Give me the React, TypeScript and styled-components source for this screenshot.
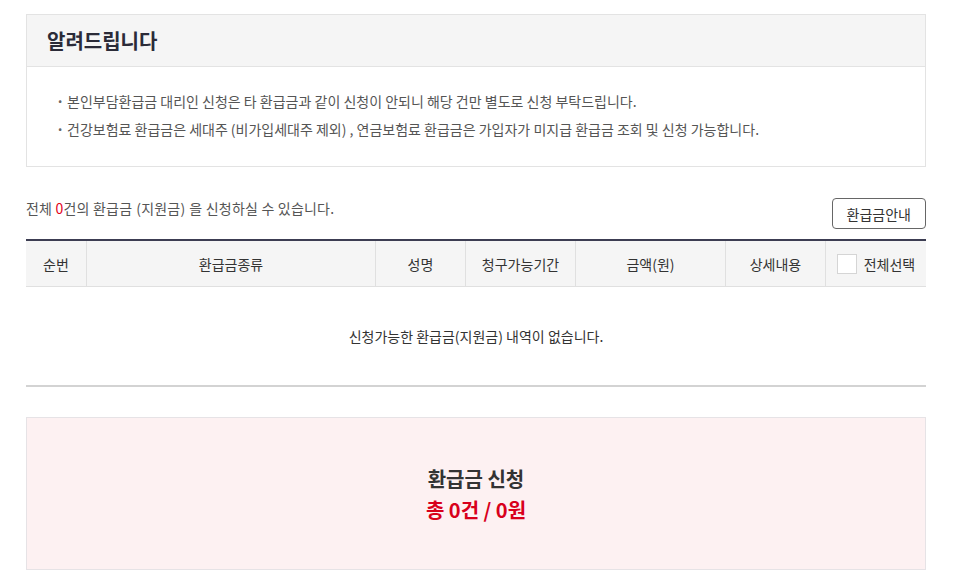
import React from "react";
import styled, { createGlobalStyle } from "styled-components";

const Global = createGlobalStyle`
  html, body { margin: 0; padding: 0; background: #fff; }
  body {
    font-family: "Noto Sans CJK KR", "Noto Sans", sans-serif;
    color: #333;
  }
  * { box-sizing: border-box; }
`;

const Page = styled.div`
  width: 900px;
  margin: 14px 0 0 26px;
`;

const Notice = styled.section`
  border: 1px solid #e3e3e3;
`;

const NoticeHead = styled.h2`
  margin: 0;
  height: 52px;
  padding: 0 20px;
  display: flex;
  align-items: center;
  background: #f5f5f5;
  border-bottom: 1px solid #e3e3e3;
  font-size: 20px;
  font-weight: 700;
  color: #2b2b38;
`;

const NoticeList = styled.ul`
  list-style: none;
  margin: 0;
  padding: 20px 0 23px 29px;
`;

const NoticeItem = styled.li`
  display: flex;
  font-size: 14px;
  line-height: 28px;
  color: #555;
  &::before {
    content: "·";
    width: 11px;
    font-weight: 700;
    color: #666;
  }
`;

const OpenParen = styled.span<{ $gap: number }>`
  margin-left: ${(p) => p.$gap}px;
`;

const CloseParen = styled.span<{ $gap: number }>`
  margin-right: ${(p) => p.$gap}px;
`;

const SummaryBar = styled.div`
  display: flex;
  justify-content: space-between;
  align-items: flex-start;
  margin-top: 31px;
  margin-bottom: 10px;
`;

const SummaryText = styled.p`
  margin: 0;
  font-size: 14px;
  line-height: 20px;
  letter-spacing: 0.2px;
  color: #555;
`;

const Red = styled.span`
  color: #e2001a;
`;

const GuideButton = styled.button`
  height: 31px;
  padding: 0 14px;
  border: 1px solid #666;
  border-radius: 4px;
  background: #fff;
  font-family: inherit;
  font-size: 14px;
  color: #333;
`;

const Table = styled.div`
  border-top: 2px solid #3c3d52;
`;

const HeadRow = styled.div`
  display: grid;
  grid-template-columns: 60px 289px 90px 110px 150px 100px 1fr;
  height: 46px;
  background: #f5f5f5;
  border-bottom: 1px solid #e0e0e0;
`;

const HeadCell = styled.div`
  display: flex;
  align-items: center;
  justify-content: center;
  gap: 7px;
  font-size: 14px;
  color: #333;
  & + & { border-left: 1px solid #e0e0e0; }
`;

const CheckBox = styled.span`
  width: 20px;
  height: 20px;
  border: 1px solid #d5d5d5;
  background: #fff;
`;

const EmptyRow = styled.div`
  height: 100px;
  display: flex;
  align-items: center;
  justify-content: center;
  font-size: 14px;
  color: #333;
  border-bottom: 2px solid #d3d3d3;
`;

const ApplyBox = styled.div`
  margin-top: 30px;
  height: 153px;
  border: 1px solid #e6e3e6;
  background: #fdf1f2;
  display: flex;
  flex-direction: column;
  align-items: center;
  justify-content: center;
`;

const ApplyTitle = styled.div`
  font-size: 20px;
  font-weight: 700;
  line-height: 31px;
  color: #333;
`;

const ApplyTotal = styled.div`
  font-size: 20px;
  font-weight: 700;
  line-height: 31px;
  color: #d8001b;
`;

const headers = ["순번", "환급금종류", "성명", "청구가능기간", "금액(원)", "상세내용"];

export default function App() {
  return (
    <>
      <Global />
      <Page>
        <Notice>
          <NoticeHead>알려드립니다</NoticeHead>
          <NoticeList>
            <NoticeItem>본인부담환급금 대리인 신청은 타 환급금과 같이 신청이 안되니 해당 건만 별도로 신청 부탁드립니다.</NoticeItem>
            <NoticeItem>
              건강보험료 환급금은 세대주<OpenParen $gap={3}>(</OpenParen>비가입세대주 제외<CloseParen $gap={3}>)</CloseParen>, 연금보험료 환급금은 가입자가 미지급 환급금 조회 및 신청 가능합니다.
            </NoticeItem>
          </NoticeList>
        </Notice>
        <SummaryBar>
          <SummaryText>
            전체 <Red>0</Red>건의 환급금<OpenParen $gap={4}>(</OpenParen>지원금<CloseParen $gap={4}>)</CloseParen>을 신청하실 수 있습니다.
          </SummaryText>
          <GuideButton>환급금안내</GuideButton>
        </SummaryBar>
        <Table>
          <HeadRow>
            {headers.map((h) => (
              <HeadCell key={h}>{h}</HeadCell>
            ))}
            <HeadCell>
              <CheckBox />
              전체선택
            </HeadCell>
          </HeadRow>
          <EmptyRow>신청가능한 환급금(지원금) 내역이 없습니다.</EmptyRow>
        </Table>
        <ApplyBox>
          <ApplyTitle>환급금 신청</ApplyTitle>
          <ApplyTotal>총 0건 / 0원</ApplyTotal>
        </ApplyBox>
      </Page>
    </>
  );
}
